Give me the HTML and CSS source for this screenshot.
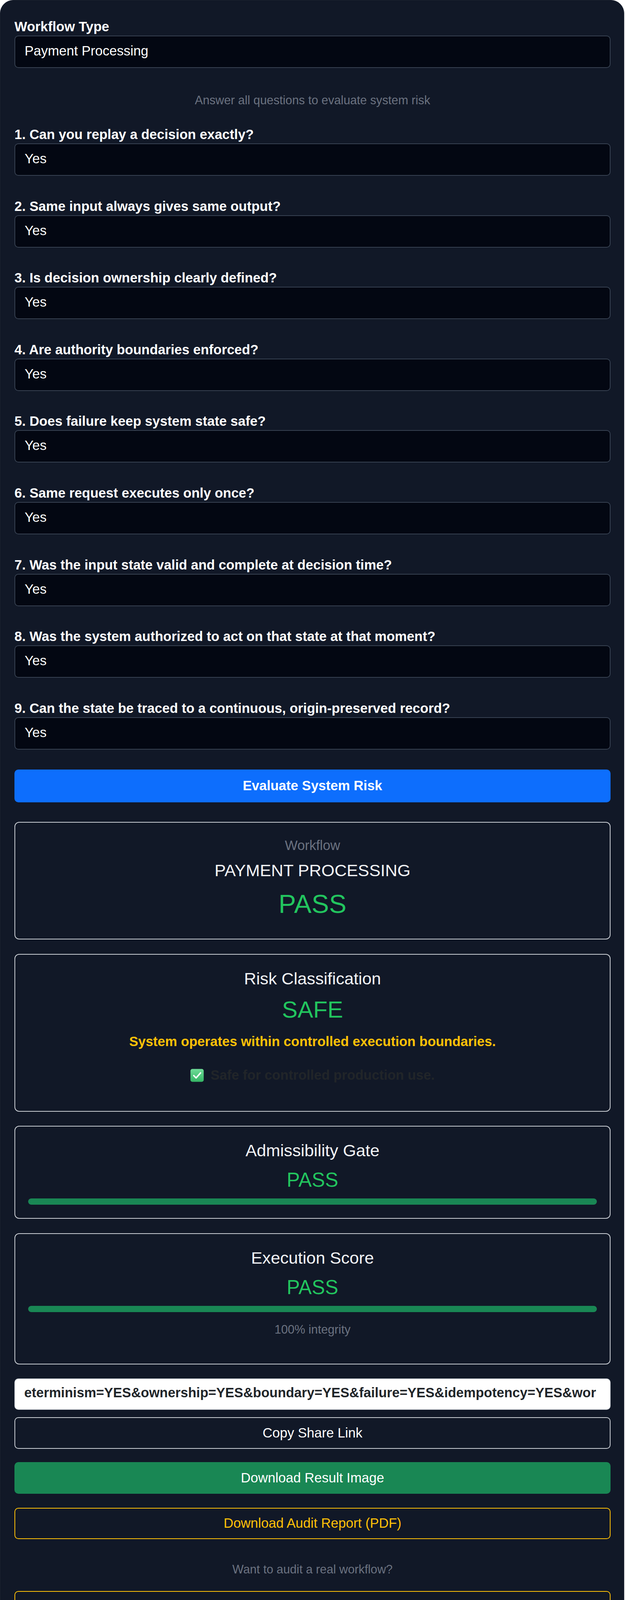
FILE: index.html
```html
<!DOCTYPE html>
<html lang="en">
<head>
<meta charset="utf-8">
<title>System Risk Evaluator</title>
<link rel="stylesheet" href="styles.css">
</head>
<body>
<main class="app">
  <div class="field">
    <label class="label" for="wf">Workflow Type</label>
    <select id="wf" class="select"><option>Payment Processing</option><option>Claims Handling</option></select>
  </div>

  <p class="hint">Answer all questions to evaluate system risk</p>

  <div class="questions">
    <div class="field"><label class="label" for="q1">1. Can you replay a decision exactly?</label><select id="q1" class="select"><option>Yes</option><option>No</option></select></div>
    <div class="field"><label class="label" for="q2">2. Same input always gives same output?</label><select id="q2" class="select"><option>Yes</option><option>No</option></select></div>
    <div class="field"><label class="label" for="q3">3. Is decision ownership clearly defined?</label><select id="q3" class="select"><option>Yes</option><option>No</option></select></div>
    <div class="field"><label class="label" for="q4">4. Are authority boundaries enforced?</label><select id="q4" class="select"><option>Yes</option><option>No</option></select></div>
    <div class="field"><label class="label" for="q5">5. Does failure keep system state safe?</label><select id="q5" class="select"><option>Yes</option><option>No</option></select></div>
    <div class="field"><label class="label" for="q6">6. Same request executes only once?</label><select id="q6" class="select"><option>Yes</option><option>No</option></select></div>
    <div class="field"><label class="label" for="q7">7. Was the input state valid and complete at decision time?</label><select id="q7" class="select"><option>Yes</option><option>No</option></select></div>
    <div class="field"><label class="label" for="q8">8. Was the system authorized to act on that state at that moment?</label><select id="q8" class="select"><option>Yes</option><option>No</option></select></div>
    <div class="field"><label class="label" for="q9">9. Can the state be traced to a continuous, origin-preserved record?</label><select id="q9" class="select"><option>Yes</option><option>No</option></select></div>
  </div>

  <button class="btn btn-primary" type="button">Evaluate System Risk</button>

  <section class="results">
    <div class="card card-workflow">
      <div class="kicker">Workflow</div>
      <div class="card-title">PAYMENT PROCESSING</div>
      <div class="verdict verdict-lg">PASS</div>
    </div>

    <div class="card card-risk">
      <div class="card-title">Risk Classification</div>
      <div class="verdict verdict-md">SAFE</div>
      <p class="risk-msg">System operates within controlled execution boundaries.</p>
      <p class="risk-note"><svg class="check" width="35" height="34" viewBox="0 0 35 34" aria-hidden="true"><defs><linearGradient id="cg" x1="0" y1="0" x2="0" y2="1"><stop offset="0" stop-color="#6fdc98"/><stop offset="1" stop-color="#35b565"/></linearGradient></defs><rect x="0.5" y="0.5" width="34" height="33" rx="5" fill="url(#cg)"/><path d="M9 17.5 L15 23.5 L26.5 10.5" fill="none" stroke="#ffffff" stroke-width="3.6" stroke-linecap="round" stroke-linejoin="round"/></svg>Safe for controlled production use.</p>
    </div>

    <div class="card card-gate">
      <div class="card-title">Admissibility Gate</div>
      <div class="verdict verdict-sm">PASS</div>
      <div class="bar"><div class="bar-fill" style="width:100%"></div></div>
    </div>

    <div class="card card-score">
      <div class="card-title">Execution Score</div>
      <div class="verdict verdict-sm">PASS</div>
      <div class="bar"><div class="bar-fill" style="width:100%"></div></div>
      <div class="integrity">100% integrity</div>
    </div>
  </section>

  <section class="share">
    <input class="share-input" type="text" readonly value="eterminism=YES&amp;ownership=YES&amp;boundary=YES&amp;failure=YES&amp;idempotency=YES&amp;wor">
    <button class="btn btn-outline-light btn-copy" type="button">Copy Share Link</button>
    <button class="btn btn-success btn-download" type="button">Download Result Image</button>
    <button class="btn btn-outline-warning btn-audit" type="button">Download Audit Report (PDF)</button>
    <p class="cta-text">Want to audit a real workflow?</p>
    <button class="btn btn-outline-warning btn-request" type="button">Request Workflow Audit</button>
  </section>

  <section class="card card-fix">
    <h2 class="fix-title">Recommended Fix Path (0 issues)</h2>
    <p class="fix-text">Fix admissibility issues first.</p>
  </section>
</main>
</body>
</html>
```

FILE: styles.css
```css
* { box-sizing: border-box; }

html, body {
  margin: 0;
  padding: 0;
  background: #ffffff;
}

body {
  font-family: "Liberation Sans", Arial, Helvetica, sans-serif;
  color: #212529;
}

.app {
  width: 1598px;
  background: #111827;
  border: 1px solid #1c2331;
  border-radius: 34px;
  padding: 47px 34px 33px 36px;
}

/* ---------- form ---------- */
.field { display: flex; flex-direction: column; }

.label {
  display: block;
  font-size: 34.56px;
  line-height: 40px;
  font-weight: 700;
  color: #ffffff;
  margin-bottom: 3px;
}

.select {
  -webkit-appearance: none;
  appearance: none;
  display: block;
  width: 100%;
  height: 83px;
  background: #030712;
  color: #ffffff;
  border: 2px solid #374151;
  border-radius: 10px;
  font-family: inherit;
  font-size: 34.56px;
  padding: 0 24px 5px;
  outline: none;
}

.hint {
  margin: 65px 0 50px;
  font-size: 30.72px;
  line-height: 35px;
  color: #6b7280;
  text-align: center;
}

.questions {
  display: flex;
  flex-direction: column;
  gap: 57.6px;
}

/* ---------- buttons ---------- */
.btn {
  display: block;
  width: 100%;
  font-family: inherit;
  font-size: 34.56px;
  border-radius: 10px;
  background: transparent;
  cursor: pointer;
  text-align: center;
}

.btn-primary {
  margin-top: 51px;
  height: 84px;
  background: #0d6efd;
  border: none;
  color: #ffffff;
  font-weight: 700;
}

.btn-outline-light {
  height: 81px;
  border: 2px solid #c9cdd3;
  color: #ffffff;
}

.btn-success {
  height: 81px;
  border: none;
  background: #198754;
  color: #ffffff;
}

.btn-outline-warning {
  height: 80px;
  border: 2px solid #ffc107;
  color: #ffc107;
}

/* ---------- result cards ---------- */
.results { margin-top: 50px; }

.card {
  border: 2px solid #c9cdd3;
  border-radius: 12px;
  padding: 36px 33px 34px;
  text-align: center;
}

.card + .card { margin-top: 36.5px; }

.kicker {
  margin-top: 2px;
  font-size: 34.56px;
  line-height: 40px;
  color: #6b7280;
}

.card-title {
  font-size: 43.2px;
  line-height: 50px;
  color: #f3f4f6;
}

.kicker + .card-title { margin-top: 19px; }

.verdict { color: #22c55e; }

.verdict-lg {
  margin-top: 22.4px;
  margin-bottom: 16px;
  font-size: 67px;
  line-height: 78px;
}

.verdict-md {
  margin-top: 20.7px;
  font-size: 60px;
  line-height: 70px;
}

.verdict-sm {
  margin-top: 22px;
  font-size: 51px;
  line-height: 58px;
}

.risk-msg {
  margin: 25.3px 0 0;
  font-size: 34.56px;
  line-height: 40px;
  font-weight: 700;
  color: #ffc107;
}

.risk-note {
  margin: 46px 0 38px;
  font-size: 34.56px;
  line-height: 40px;
  font-weight: 700;
  color: #212529;
}

.check {
  vertical-align: -6px;
  margin-right: 17px;
}

.bar {
  margin-top: 18px;
  height: 16px;
  border-radius: 8px;
  background: #2a3241;
  overflow: hidden;
}

.bar-fill {
  height: 100%;
  border-radius: 8px;
  background: #198754;
}

.integrity {
  margin: 27px 0 35px;
  font-size: 30.72px;
  line-height: 36px;
  color: #6b7280;
}

/* ---------- share / actions ---------- */
.share { margin-top: 36px; }

.share-input {
  display: block;
  width: 100%;
  height: 80px;
  background: #ffffff;
  border: 2px solid #dee2e6;
  border-radius: 10px;
  font-family: inherit;
  font-size: 34.56px;
  font-weight: 700;
  color: #212529;
  padding: 0 20px 6px 23px;
  outline: none;
}

.btn-copy { margin-top: 19px; }
.btn-download { margin-top: 34px; }
.btn-audit { margin-top: 36px; }

.cta-text {
  margin: 60.4px 0 0;
  font-size: 30.72px;
  line-height: 36px;
  color: #6b7280;
  text-align: center;
}

.btn-request { margin-top: 36.6px; height: 81px; }

/* ---------- fix path ---------- */
.card-fix {
  margin-top: 88px;
  text-align: left;
  padding: 34px 33px 70px;
}

.fix-title {
  margin: 0;
  font-size: 43.2px;
  line-height: 50px;
  font-weight: 400;
  color: #f3f4f6;
}

.fix-text {
  margin: 26.4px 0 0;
  font-size: 30.72px;
  line-height: 36px;
  color: #6b7280;
}
```
